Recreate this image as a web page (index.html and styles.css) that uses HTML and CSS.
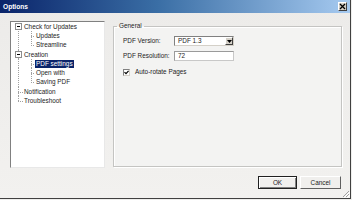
FILE: index.html
```html
<!DOCTYPE html>
<html>
<head>
<meta charset="utf-8">
<link rel="stylesheet" href="styles.css">
</head>
<body>
<div class="window">
  <div class="titlebar">
    <span class="title">Options</span>
    <span class="close"><svg width="7" height="7" viewBox="0 0 7 7"><path d="M1 1L6 6M6 1L1 6" stroke="#000" stroke-width="1.3"/></svg></span>
  </div>
  <div class="content">
    <div class="main">
      <div class="tree">
        <div class="row"><span class="c c0 bx"><span class="box"></span></span><span class="lbl">Check for Updates</span></div>
        <div class="row"><span class="c c0 v"></span><span class="c c1 t"></span><span class="lbl">Updates</span></div>
        <div class="row"><span class="c c0 v"></span><span class="c c1 l"></span><span class="lbl">Streamline</span></div>
        <div class="row"><span class="c c0 bx up"><span class="box"></span></span><span class="lbl">Creation</span></div>
        <div class="row"><span class="c c0 v"></span><span class="c c1 t"></span><span class="lbl sel">PDF settings</span></div>
        <div class="row"><span class="c c0 v"></span><span class="c c1 t"></span><span class="lbl">Open with</span></div>
        <div class="row"><span class="c c0 v"></span><span class="c c1 l"></span><span class="lbl">Saving PDF</span></div>
        <div class="row"><span class="c c0 t"></span><span class="lbl">Notification</span></div>
        <div class="row"><span class="c c0 l"></span><span class="lbl">Troubleshoot</span></div>
      </div>
      <fieldset class="group">
        <legend class="legend">General</legend>
        <div class="form">
          <span class="flabel">PDF Version:</span>
          <div class="select"><span class="seltext">PDF 1.3</span><span class="drop"><svg width="5" height="3" viewBox="0 0 5 3"><path d="M0 0H5L2.5 3Z" fill="#000"/></svg></span></div>
          <span class="flabel">PDF Resolution:</span>
          <div class="input">72</div>
          <div class="check">
            <span class="cbox"><svg width="5" height="5" viewBox="0 0 5 5"><path d="M0.5 2.2L2 3.7L4.6 0.8" fill="none" stroke="#000" stroke-width="1.2"/></svg></span>
            <span>Auto-rotate Pages</span>
          </div>
        </div>
      </fieldset>
    </div>
    <div class="buttons">
      <div class="btn default">OK</div>
      <div class="btn cancel">Cancel</div>
    </div>
  </div>
  <svg class="grip" width="8" height="8" viewBox="0 0 8 8"><path d="M7 1L1 7M7 4L4 7" stroke="#a0a0a0" stroke-width="1"/><path d="M8 2L2 8M8 5L5 8" stroke="#fff" stroke-width="1"/></svg>
</div>
</body>
</html>
```
FILE: styles.css
```css
* { box-sizing: border-box; }
html, body { margin: 0; padding: 0; }
body {
  width: 352px;
  height: 200px;
  overflow: hidden;
  background: #eeeeec;
  font-family: "Liberation Sans", Arial, sans-serif;
  font-size: 6.4px;
  color: #1c1c1c;
}
.window {
  position: relative;
  width: 351px;
  height: 199px;
  background: linear-gradient(180deg, #ecebe9 0%, #f2f1ef 100%);
  border-right: 1px solid #404040;
  border-bottom: 1px solid #404040;
  display: flex;
  flex-direction: column;
}
.titlebar {
  height: 13px;
  flex: none;
  background: linear-gradient(90deg, #0a246a 0%, #3a6ea5 45%, #a6caf0 100%);
  display: flex;
  align-items: center;
  justify-content: space-between;
  padding: 0 3px 0 3px;
}
.title {
  color: #fff;
  font-weight: bold;
  font-size: 6.6px;
  line-height: 8px;
}
.close {
  width: 9px;
  height: 9px;
  background: #d4d0c8;
  border: 1px solid;
  border-color: #fff #404040 #404040 #fff;
  display: flex;
  align-items: center;
  justify-content: center;
}
.close svg { display: block; }
.content {
  flex: 1;
  display: flex;
  flex-direction: column;
  padding: 8px 9px 0 10px;
}
.main {
  display: flex;
  align-items: flex-start;
  gap: 8px;
}
.tree {
  width: 95px;
  height: 147px;
  flex: none;
  background: #fff;
  border: 1px solid;
  border-color: #808080 #e8e8e8 #e8e8e8 #808080;
  padding: 0 0 0 2px;
}
.row {
  height: 9.3px;
  display: flex;
  align-items: center;
}
.c {
  position: relative;
  flex: none;
  align-self: stretch;
}
.c0 { width: 10px; --x: 5px; }
.c1 { width: 12px; --x: 8px; }
.c::before, .c::after {
  content: none;
  position: absolute;
}
.v::before, .t::before, .l::before, .bx::before {
  content: "";
  left: var(--x);
  width: 1px;
  background: repeating-linear-gradient(180deg, #a0a0a0 0 1px, transparent 1px 2px);
}
.v::before, .t::before { top: 0; bottom: 0; }
.l::before { top: 0; height: 50%; }
.bx::before { top: 50%; bottom: 0; }
.bx.up::before { top: 0; bottom: 0; }
.t::after, .l::after {
  content: "";
  left: var(--x);
  right: 0;
  top: 50%;
  height: 1px;
  background: repeating-linear-gradient(90deg, #a0a0a0 0 1px, transparent 1px 2px);
}
.box {
  position: absolute;
  left: 2px;
  top: 50%;
  width: 7px;
  height: 7px;
  margin-top: -3.5px;
  background: #fff;
  border: 1px solid #8c8c8c;
}
.box::after {
  content: "";
  position: absolute;
  left: 1px;
  top: 2px;
  width: 3px;
  height: 1px;
  background: #000;
}
.lbl {
  padding: 0 1px;
  line-height: 8px;
  height: 8px;
  white-space: nowrap;
}
.lbl.sel {
  background: #0a246a;
  color: #fff;
}
.group {
  margin: 1px 0 0 0;
  width: 229px;
  height: 145px;
  flex: none;
  border: 1px solid #c4c4c2;
  box-shadow: inset 1px 1px 0 #fff, 1px 1px 0 #fff;
  padding: 0 0 0 3px;
  min-width: 0;
  background: #f3f3f2;
}
.legend {
  padding: 0 2px;
  line-height: 8px;
  font-size: 6.4px;
}
.form {
  margin: 6px 0 0 6px;
  display: grid;
  grid-template-columns: 51px 60px;
  grid-auto-rows: auto;
  row-gap: 5px;
  align-items: center;
}
.flabel {
  line-height: 10px;
  white-space: nowrap;
}
.select {
  height: 10px;
  background: #fff;
  border: 1px solid;
  border-color: #808080 #d4d0c8 #d4d0c8 #808080;
  display: flex;
  align-items: center;
  justify-content: space-between;
  padding-left: 3px;
}
.seltext { line-height: 8px; }
.drop {
  width: 8px;
  height: 8px;
  background: #d4d0c8;
  border: 1px solid;
  border-color: #fff #404040 #404040 #fff;
  display: flex;
  align-items: center;
  justify-content: center;
}
.drop svg { display: block; }
.input {
  height: 10px;
  background: #fff;
  border: 1px solid;
  border-color: #9a9a9a #c8c8c8 #c8c8c8 #9a9a9a;
  padding-left: 3px;
  line-height: 8px;
}
.check {
  grid-column: 1 / 3;
  margin-top: 2px;
  display: flex;
  align-items: center;
  gap: 5px;
  line-height: 8px;
}
.cbox {
  width: 7px;
  height: 7px;
  background: #fff;
  border: 1px solid;
  border-color: #808080 #d4d0c8 #d4d0c8 #808080;
  display: flex;
  align-items: center;
  justify-content: center;
}
.cbox svg { display: block; }
.buttons {
  margin-top: 8px;
  display: flex;
  justify-content: flex-end;
  gap: 3px;
}
.btn {
  height: 13px;
  background: #f0efed;
  border: 1px solid;
  border-color: #fff #606060 #606060 #fff;
  display: flex;
  align-items: center;
  justify-content: center;
  line-height: 8px;
}
.btn.default {
  width: 39px;
  border: 1px solid #202020;
  box-shadow: inset 1px 1px 0 #fff, inset -1px -1px 0 #808080;
}
.btn.cancel { width: 41px; }
.grip {
  position: absolute;
  right: 0;
  bottom: 0;
  display: block;
}
```
